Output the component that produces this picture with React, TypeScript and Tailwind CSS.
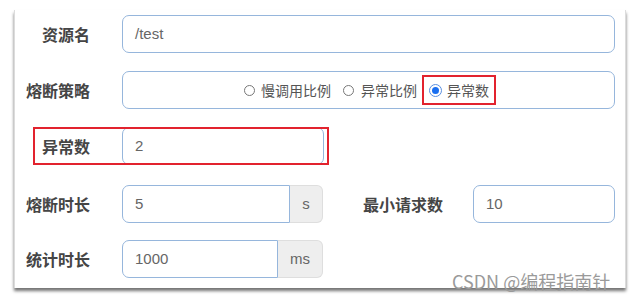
import React from "react";

const cjk = '"Noto Sans CJK SC", "Noto Sans", sans-serif';
const latin = '"Liberation Sans", Arial, "Noto Sans CJK SC", sans-serif';

function Label({ children, className = "" }: { children: React.ReactNode; className?: string }) {
  return (
    <div
      className={"text-[16px] font-bold text-[#454545] leading-none whitespace-nowrap " + className}
      style={{ fontFamily: cjk }}
    >
      {children}
    </div>
  );
}

export default function App() {
  return (
    <div className="relative w-[630px] h-[300px] bg-white overflow-hidden">
      <div className="ml-[14px] mt-[10px] w-[612px] h-[278px] border-l border-r border-[#dcdcdc] bg-white shadow-[0_3px_3px_rgba(0,0,0,0.55)] pt-[5px]">
        {/* Row 1 */}
        <div className="flex items-center h-[38px]">
          <Label className="w-[75px] text-right">资源名</Label>
          <div
            className="ml-[32px] w-[493px] h-[38px] rounded-[7px] border-[1.5px] border-[#96b6dc] flex items-center pl-[12px] text-[15px] text-[#666]"
            style={{ fontFamily: latin }}
          >
            /test
          </div>
        </div>

        {/* Row 2 */}
        <div className="flex items-center h-[38px] mt-[18px]">
          <Label className="w-[75px] text-right">熔断策略</Label>
          <div
            className="ml-[32px] w-[493px] h-[38px] rounded-[7px] border-[1.5px] border-[#96b6dc] flex items-center pl-[121px] text-[14px] text-[#555]"
            style={{ fontFamily: cjk }}
          >
            <span className="w-[11px] h-[11px] rounded-full border border-[#777] bg-white" />
            <span className="ml-[6px] leading-none">慢调用比例</span>
            <span className="ml-[12px] w-[11px] h-[11px] rounded-full border border-[#777] bg-white" />
            <span className="ml-[7px] leading-none">异常比例</span>
            <span className="ml-[5px] h-[30px] border-2 border-[#e2232e] flex items-center pl-[5px] pr-[5px]">
              <span className="w-[13px] h-[13px] rounded-full border border-[#5a8fe0] bg-white flex items-center justify-center">
                <span className="w-[7px] h-[7px] rounded-full bg-[#1a6ff0]" />
              </span>
              <span className="ml-[5px] leading-none">异常数</span>
            </span>
          </div>
        </div>

        {/* Row 3 */}
        <div className="relative flex items-center h-[38px] mt-[18px]">
          <Label className="w-[75px] text-right">异常数</Label>
          <div
            className="ml-[32px] w-[202px] h-[38px] rounded-[7px] border-[1.5px] border-[#96b6dc] flex items-center pl-[12px] text-[15px] text-[#666]"
            style={{ fontFamily: latin }}
          >
            2
          </div>
          <div className="absolute left-[18px] top-0 w-[296px] h-[38px] border-2 border-[#e2232e]" />
        </div>

        {/* Row 4 */}
        <div className="flex items-center h-[38px] mt-[20px]">
          <Label className="w-[75px] text-right">熔断时长</Label>
          <div className="ml-[32px] flex h-[38px]" style={{ fontFamily: latin }}>
            <div className="w-[168px] h-full rounded-l-[7px] border-[1.5px] border-[#96b6dc] flex items-center pl-[12px] text-[15px] text-[#666]">
              5
            </div>
            <div className="w-[33px] h-full rounded-r-[6px] border border-l-0 border-[#dedede] bg-[#eeeeee] flex items-center justify-center text-[15px] text-[#666]">
              s
            </div>
          </div>
          <Label className="ml-[40px]">最小请求数</Label>
          <div
            className="ml-[30px] w-[142px] h-[38px] rounded-[7px] border-[1.5px] border-[#96b6dc] flex items-center pl-[12px] text-[15px] text-[#666]"
            style={{ fontFamily: latin }}
          >
            10
          </div>
        </div>

        {/* Row 5 */}
        <div className="flex items-center h-[38px] mt-[17px]">
          <Label className="w-[75px] text-right">统计时长</Label>
          <div className="ml-[32px] flex h-[38px]" style={{ fontFamily: latin }}>
            <div className="w-[156px] h-full rounded-l-[7px] border-[1.5px] border-[#96b6dc] flex items-center pl-[12px] text-[15px] text-[#666]">
              1000
            </div>
            <div className="w-[45px] h-full rounded-r-[6px] border border-l-0 border-[#dedede] bg-[#eeeeee] flex items-center justify-center text-[15px] text-[#666]">
              ms
            </div>
          </div>
        </div>
      </div>

      {/* Watermark */}
      <div
        className="absolute left-[452px] top-[272px] text-[18px] leading-none text-[#9a9a9a] whitespace-nowrap"
        style={{ fontFamily: cjk }}
      >
        CSDN @编程指南针
      </div>
    </div>
  );
}
